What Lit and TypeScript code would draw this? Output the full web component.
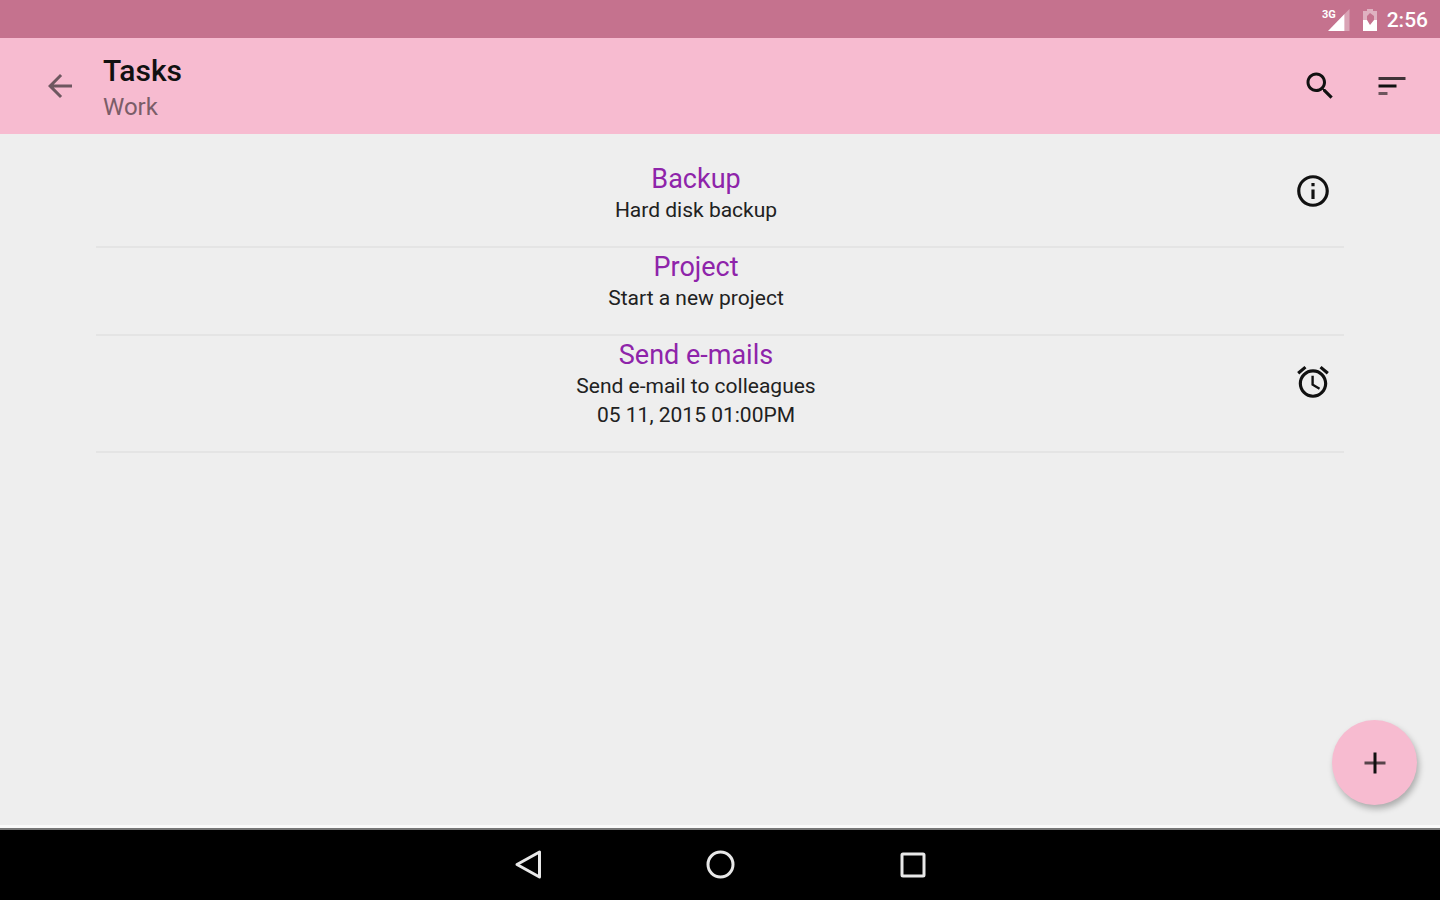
import { LitElement, html, css, svg, nothing } from "lit";
import { customElement, property } from "lit/decorators.js";

interface Task {
  title: string;
  lines: string[];
  icon?: "info" | "alarm";
}

const TASKS: Task[] = [
  { title: "Backup", lines: ["Hard disk backup"], icon: "info" },
  { title: "Project", lines: ["Start a new project"] },
  { title: "Send e-mails", lines: ["Send e-mail to colleagues", "05 11, 2015 01:00PM"], icon: "alarm" },
];

const PATHS = {
  info: svg`<path d="M11 17h2v-6h-2v6zm1-15C6.48 2 2 6.48 2 12s4.480 10 10 10 10-4.480 10-10S17.520 2 12 2zm0 18c-4.410 0-8-3.590-8-8s3.590-8 8-8 8 3.590 8 8-3.590 8-8 8zM11 9h2V7h-2v2z"/>`,
  alarm: svg`<path d="M22 5.720l-4.600-3.860-1.290 1.530 4.600 3.860L22 5.720zM7.880 3.390L6.600 1.860 2 5.710l1.290 1.530 4.590-3.850zM12.500 8H11v6l4.750 2.850.75-1.230-4-2.370V8zM12 4c-4.970 0-9 4.030-9 9s4.020 9 9 9c4.970 0 9-4.030 9-9s-4.030-9-9-9zm0 16c-3.870 0-7-3.130-7-7s3.130-7 7-7 7 3.130 7 7-3.130 7-7 7z"/>`,
};

const button = css`
  button {
    display: flex;
    align-items: center;
    justify-content: center;
    padding: 0;
    border: 0;
    background: none;
    color: inherit;
    cursor: pointer;
  }
  svg {
    display: block;
    fill: currentColor;
  }
`;

@customElement("status-bar")
class StatusBar extends LitElement {
  static styles = css`
    :host {
      display: flex;
      align-items: center;
      justify-content: flex-end;
      height: 38px;
      padding: 2px 12px 0 0;
      box-sizing: border-box;
      background: #c5728e;
      color: #fff;
      font-size: 21px;
      font-weight: 500;
    }
    .signal {
      margin-right: 12px;
    }
    .battery {
      margin-right: 9px;
    }
    .net {
      font: 700 11px Roboto, sans-serif;
    }
  `;
  render() {
    return html`
      <svg class="signal" width="28" height="24" viewBox="0 0 28 24" fill="#fff" role="img" aria-label="3G signal">
        <path d="M27.500 1v22h-5V6z" opacity=".35" />
        <path d="M6 23L22.500 6v17z" />
        <text class="net" x="0" y="10">3G</text>
      </svg>
      <svg class="battery" width="16" height="24" viewBox="0 0 16 24" fill="#fff" role="img" aria-label="Battery charging">
        <path d="M5 1h6v2h4v9h-3V8L8 5 5 8v4H1V3h4z" opacity=".45" />
        <path d="M1 12h4l3 5 4-5h3v11H1z" />
      </svg>
      <span>2:56</span>
    `;
  }
}

@customElement("app-toolbar")
class AppToolbar extends LitElement {
  static styles = [
    button,
    css`
      :host {
        display: flex;
        align-items: center;
        height: 96px;
        padding: 0 12px 0 24px;
        box-sizing: border-box;
        background: #f7bbd0;
        color: #111;
      }
      button {
        width: 72px;
        height: 72px;
      }
      .back {
        color: #6e5760;
      }
      .titles {
        flex: 1;
        padding: 6px 0 0 7px;
      }
      h1 {
        margin: 0;
        font-size: 30px;
        line-height: 36px;
        font-weight: 500;
      }
      p {
        margin: 0;
        font-size: 24px;
        line-height: 36px;
        color: #7b5d68;
      }
    `,
  ];
  render() {
    return html`
      <button class="back" aria-label="Back">
        <svg width="36" height="36" viewBox="0 0 24 24">
          <path d="M20 11H7.830l5.590-5.590L12 4l-8 8 8 8 1.410-1.410L7.830 13H20v-2z" />
        </svg>
      </button>
      <div class="titles">
        <h1>Tasks</h1>
        <p>Work</p>
      </div>
      <button aria-label="Search">
        <svg width="36" height="36" viewBox="0 0 24 24">
          <path d="M15.500 14h-.79l-.28-.27C15.410 12.590 16 11.110 16 9.500 16 5.910 13.090 3 9.500 3S3 5.910 3 9.500 5.910 16 9.500 16c1.610 0 3.090-.59 4.230-1.570l.27.28v.79l5 4.990L20.490 19l-4.990-5zm-6 0C7.010 14 5 11.990 5 9.500S7.010 5 9.500 5 14 7.010 14 9.500 11.990 14 9.500 14z" />
        </svg>
      </button>
      <button aria-label="Sort">
        <svg width="36" height="36" viewBox="0 0 24 24">
          <path d="M3 6h18v2H3z" opacity=".8" />
          <path d="M3 11h12v2H3z" />
          <path d="M3 16h6v2H3z" opacity=".6" />
        </svg>
      </button>
    `;
  }
}

@customElement("task-row")
class TaskRow extends LitElement {
  @property({ attribute: false }) task!: Task;
  static styles = css`
    :host {
      display: grid;
      grid-template-columns: 1fr 48px;
      align-items: center;
      padding: 2px 0 21px;
      border-bottom: 2px solid #e4e4e4;
    }
    .text {
      text-align: center;
    }
    h2 {
      margin: 0;
      font-size: 27px;
      line-height: 34px;
      font-weight: 400;
      color: #8e24aa;
    }
    p {
      margin: 0;
      font-size: 21px;
      line-height: 29px;
      color: #212121;
    }
    svg {
      display: block;
      width: 38px;
      height: 38px;
      margin: 0 0 5px -2px;
      fill: #111;
    }
  `;
  render() {
    const { title, lines, icon } = this.task;
    return html`
      <div class="text">
        <h2>${title}</h2>
        ${lines.map((line) => html`<p>${line}</p>`)}
      </div>
      ${icon ? html`<svg viewBox="0 0 24 24" role="img" aria-label=${icon}>${PATHS[icon]}</svg>` : nothing}
    `;
  }
}

@customElement("nav-bar")
class NavBar extends LitElement {
  static styles = [
    button,
    css`
      :host {
        display: flex;
        justify-content: center;
        gap: 96px;
        height: 72px;
        box-sizing: border-box;
        border-top: 2px solid #777;
        background: #000;
        color: #e8e8e8;
      }
      button {
        width: 96px;
      }
      svg {
        fill: none;
        stroke: currentColor;
        stroke-width: 3;
        stroke-linejoin: round;
      }
    `,
  ];
  render() {
    return html`
      <button aria-label="Back">
        <svg width="32" height="32" viewBox="0 0 32 32"><path d="M27.500 3v25L5 15.500z" /></svg>
      </button>
      <button aria-label="Home">
        <svg width="32" height="32" viewBox="0 0 32 32"><circle cx="16.500" cy="15.500" r="12.500" /></svg>
      </button>
      <button aria-label="Recent apps">
        <svg width="32" height="32" viewBox="0 0 32 32"><rect x="6" y="5" width="22" height="22" rx="1" /></svg>
      </button>
    `;
  }
}

@customElement("app-root")
class AppRoot extends LitElement {
  static styles = [
    button,
    css`
      :host {
        display: flex;
        flex-direction: column;
        min-height: 100vh;
        background: #eee;
        font-family: Roboto, sans-serif;
      }
      main {
        position: relative;
        flex: 1;
        padding: 26px 96px;
        border-bottom: 3px solid #fafafa;
      }
      .fab {
        position: absolute;
        right: 23px;
        bottom: 20px;
        width: 85px;
        height: 85px;
        border-radius: 50%;
        background: #f7bbd0;
        color: #111;
        box-shadow: 2px 4px 6px rgba(0, 0, 0, 0.28);
      }
    `,
  ];
  render() {
    return html`
      <status-bar></status-bar>
      <app-toolbar></app-toolbar>
      <main>
        ${TASKS.map((task) => html`<task-row .task=${task}></task-row>`)}
        <button class="fab" aria-label="Add task">
          <svg width="36" height="36" viewBox="0 0 24 24">
            <path d="M5 11h14v2H5z" opacity=".7" />
            <path d="M11 5h2v14h-2z" />
          </svg>
        </button>
      </main>
      <nav-bar></nav-bar>
    `;
  }
}
